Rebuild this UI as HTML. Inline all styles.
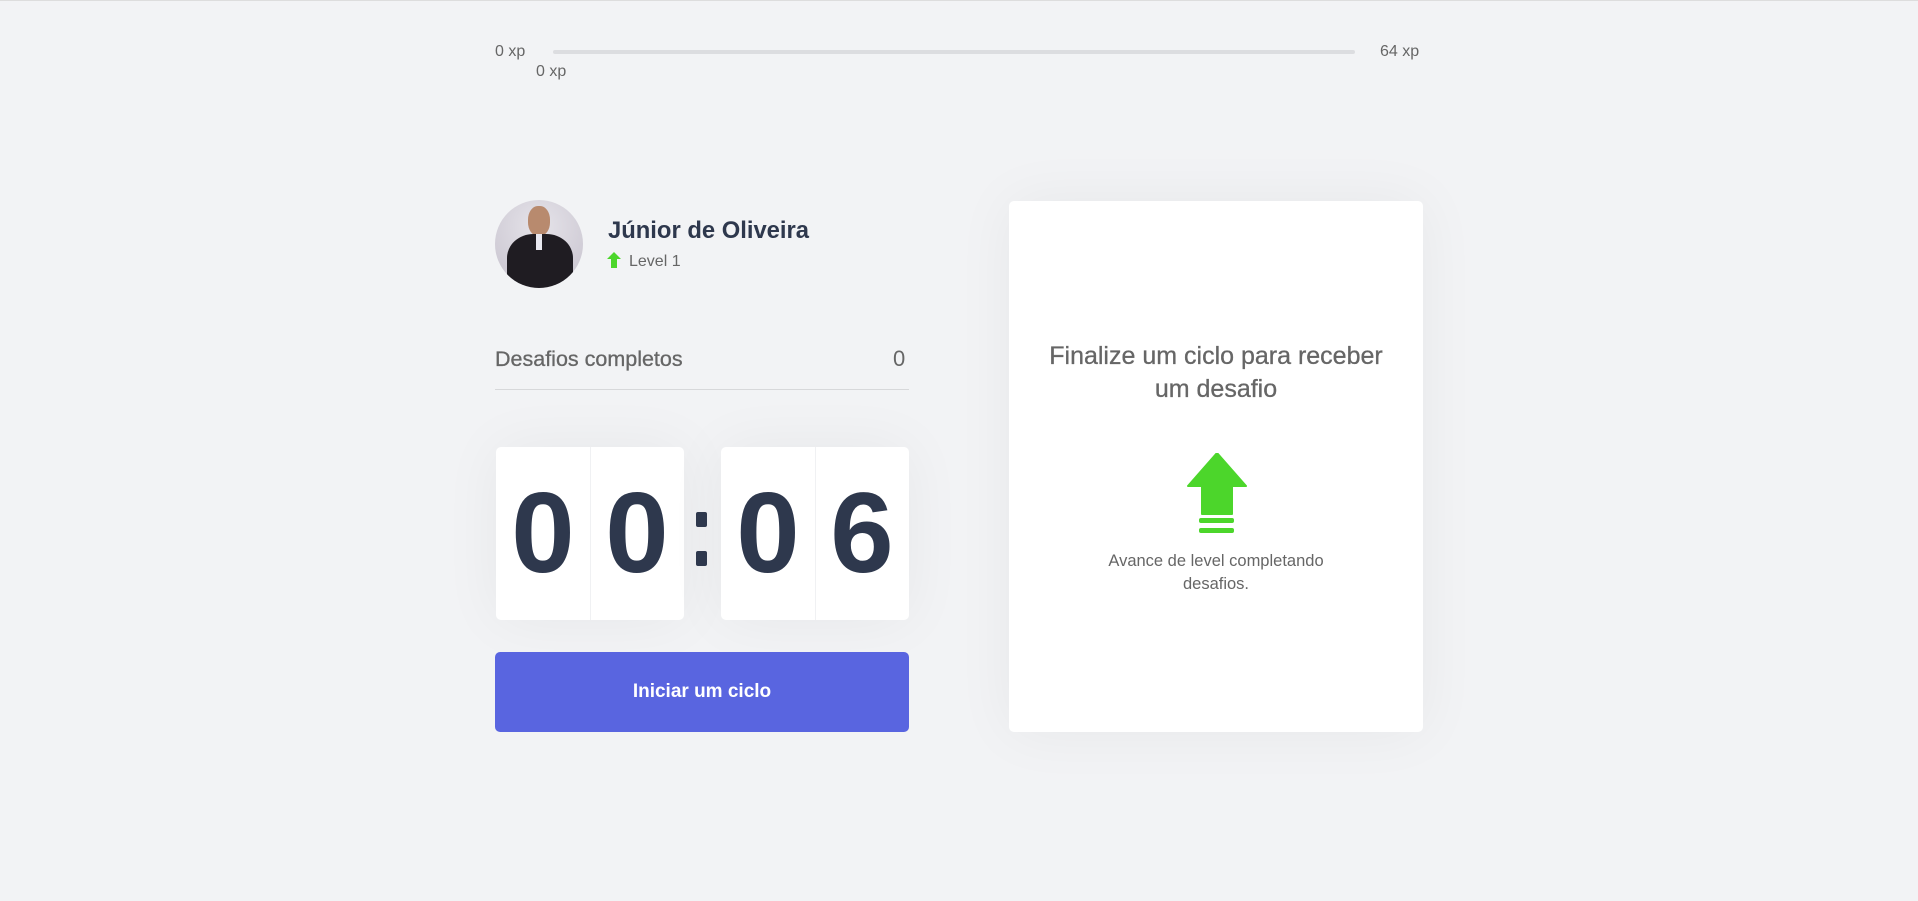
<!DOCTYPE html>
<html><head><meta charset="utf-8"><style>
*{margin:0;padding:0;box-sizing:border-box}
body{width:1918px;height:901px;background:#f2f3f5;font-family:"Liberation Sans",sans-serif;color:#666;position:relative;overflow:hidden;border-top:1px solid #ddd}
.a{position:absolute}
.d{display:inline-block;transform:scaleX(1)}
</style></head><body>
<div class="a" style="left:495px;top:42px;font-size:16px">0 xp</div>
<div class="a" style="left:553px;top:49px;width:802px;height:4px;border-radius:4px;background:#dcdde0"></div>
<div class="a" style="left:1380px;top:42px;font-size:16px">64 xp</div>
<div class="a" style="left:536px;top:62px;font-size:16px">0 xp</div>

<div class="a" style="left:495px;top:199px;width:88px;height:88px;border-radius:50%;background:radial-gradient(circle at 50% 30%,#e6e4ea 0,#cfcbd5 70%);overflow:hidden">
 <div class="a" style="left:33px;top:6px;width:22px;height:30px;border-radius:45%;background:#b88a6e"></div>
 <div class="a" style="left:12px;top:34px;width:66px;height:60px;border-radius:40% 40% 0 0;background:#1f1c22"></div>
 <div class="a" style="left:41px;top:34px;width:6px;height:16px;background:#e8e8f0"></div>
</div>
<div class="a" style="left:608px;top:216px;font-size:23.8px;font-weight:bold;color:#2e384d">Júnior de Oliveira</div>
<svg class="a" style="left:607px;top:251px" width="14" height="16" viewBox="0 0 14 16"><path d="M7 0L14 7H10V16H4V7H0Z" fill="#4cd62b"/></svg>
<div class="a" style="left:629px;top:252px;font-size:16px">Level 1</div>

<div class="a" style="left:495px;top:346px;font-size:21.5px;-webkit-text-stroke:.3px #666">Desafios completos</div>
<div class="a" style="left:893px;top:345px;font-size:22px">0</div>
<div class="a" style="left:495px;top:388px;width:414px;height:1px;background:#d7d8da"></div>

<div class="a" style="left:496px;top:446px;width:188px;height:173px;background:#fff;border-radius:5px;box-shadow:0 0 60px rgba(0,0,0,.05)">
 <div class="a" style="left:94px;top:0;width:1px;height:173px;background:#f0f1f3"></div>
</div>
<div class="a" style="left:721px;top:446px;width:188px;height:173px;background:#fff;border-radius:5px;box-shadow:0 0 60px rgba(0,0,0,.05)">
 <div class="a" style="left:94px;top:0;width:1px;height:173px;background:#f0f1f3"></div>
</div>
<div class="a" style="left:496px;top:468px;width:188px;height:130px;display:flex;justify-content:space-around;font-size:114px;line-height:130px;color:#2e384d;font-weight:bold"><span class="d">0</span><span class="d">0</span></div>
<div class="a" style="left:721px;top:468px;width:188px;height:130px;display:flex;justify-content:space-around;font-size:114px;line-height:130px;color:#2e384d;font-weight:bold"><span class="d">0</span><span class="d">6</span></div>
<div class="a" style="left:696px;top:511px;width:11px;height:15px;background:#2e384d;border-radius:2px"></div>
<div class="a" style="left:696px;top:550px;width:11px;height:15px;background:#2e384d;border-radius:2px"></div>

<div class="a" style="left:495px;top:651px;width:414px;height:80px;background:#5965e0;border-radius:5px;color:#fff;font-size:19px;font-weight:bold;display:flex;align-items:center;justify-content:center">Iniciar um ciclo</div>

<div class="a" style="left:1009px;top:200px;width:414px;height:531px;background:#fff;border-radius:5px;box-shadow:0 0 60px rgba(0,0,0,.05)">
 <div class="a" style="left:0;top:139px;width:414px;text-align:center;font-size:25px;line-height:33px;color:#666;padding:0 30px;-webkit-text-stroke:.3px #666">Finalize um ciclo para receber um desafio</div>
 <svg class="a" style="left:178px;top:252px" width="60" height="82" viewBox="0 0 60 82"><path d="M30 0L59 33H45V61H15V33H1Z" fill="#4cd62b" stroke="#4cd62b" stroke-width="2" stroke-linejoin="round"/><rect x="12" y="65" width="35" height="5" rx="2" fill="#4cd62b"/><rect x="12" y="75" width="35" height="5" rx="2" fill="#4cd62b"/></svg>
 <div class="a" style="left:0;top:349px;width:414px;text-align:center;font-size:16.5px;line-height:23px;color:#666;padding:0 80px">Avance de level completando desafios.</div>
</div>
</body></html>
